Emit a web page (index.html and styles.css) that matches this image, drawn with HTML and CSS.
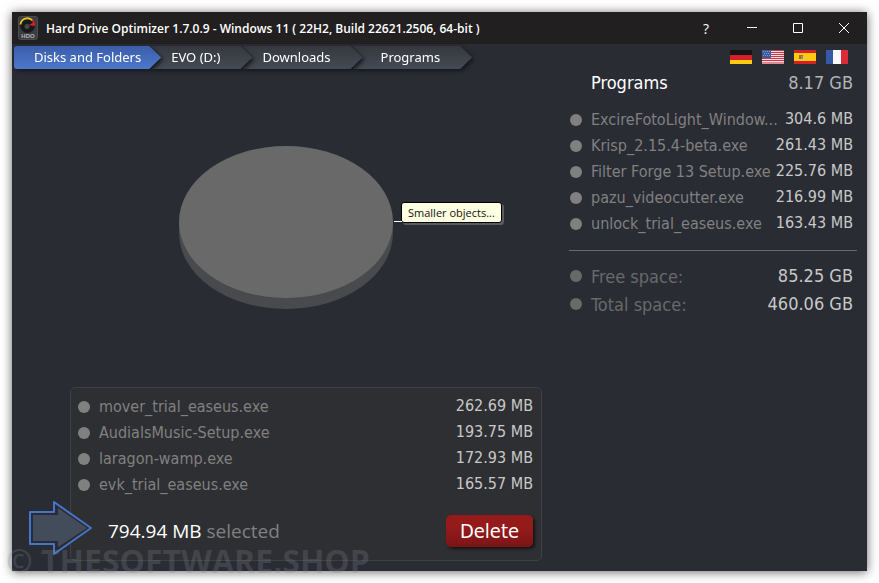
FILE: index.html
```
<!DOCTYPE html>
<html lang="en">
<head>
    <meta charset="UTF-8">
    <meta name="viewport" content="width=device-width, initial-scale=1.0">
    <title>Hard Drive Optimizer</title>
    <link rel="stylesheet" href="styles.css">
</head>
<body>
    <div class="window">
        <!-- Title bar -->
        <header class="titlebar">
            <svg class="app-icon" width="20" height="24" viewBox="0 0 20 24">
                <rect x="0.5" y="0.5" width="19" height="23" rx="2" fill="#3b3d42" stroke="#4a4c50"/>
                <circle cx="9.500" cy="9.500" r="7.500" fill="#18191b"/>
                <path d="M2.500 8.500a7 7 0 0 1 12-4" fill="none" stroke="#e8c41c" stroke-width="1.800"/>
                <path d="M14.500 4.500a7 7 0 0 1 2 5" fill="none" stroke="#d42027" stroke-width="1.800"/>
                <circle cx="9" cy="10.500" r="2.500" fill="#45474b"/>
                <path d="M10.500 9L16 6.500V10z" fill="#d42027"/>
                <text x="10" y="22" class="app-icon-text">HDO</text>
            </svg>
            <h1>Hard Drive Optimizer 1.7.0.9 - Windows 11 ( 22H2, Build 22621.2506, 64-bit )</h1>
            <div class="window-buttons">
                <button type="button" class="help">?</button>
                <button type="button" aria-label="Minimize">
                    <svg width="10" height="10" viewBox="0 0 10 10"><path d="M0 4.500h10"/></svg>
                </button>
                <button type="button" aria-label="Maximize">
                    <svg width="10" height="10" viewBox="0 0 10 10"><path d="M0.500 0.500h9v9h-9z"/></svg>
                </button>
                <button type="button" aria-label="Close">
                    <svg width="10" height="10" viewBox="0 0 10 10"><path d="M0 0l10 10M10 0L0 10"/></svg>
                </button>
            </div>
        </header>

        <div class="content">
            <main class="left">
                <nav>
                    <ul class="breadcrumb">
                        <li class="first active"><a href="#">Disks and Folders</a></li>
                        <li><a href="#">EVO (D:)</a></li>
                        <li><a href="#">Downloads</a></li>
                        <li class="last"><a href="#">Programs</a></li>
                    </ul>
                </nav>

                <!-- Pie chart -->
                <div class="chart-area">
                    <div class="chart">
                        <svg width="214" height="163" viewBox="0 0 214 163">
                            <path d="M0 76v11a107 76 0 0 0 214 0v-11z" fill="#494a4e"/>
                            <ellipse cx="107" cy="76" rx="107" ry="76" fill="#696969"/>
                        </svg>
                        <span class="chart-label">Smaller objects...</span>
                    </div>
                </div>

                <!-- Files marked for deletion -->
                <section class="selection">
                    <table class="files">
                        <tr><th scope="row">mover_trial_easeus.exe</th><td>262.69 MB</td></tr>
                        <tr><th scope="row">AudialsMusic-Setup.exe</th><td>193.75 MB</td></tr>
                        <tr><th scope="row">laragon-wamp.exe</th><td>172.93 MB</td></tr>
                        <tr><th scope="row">evk_trial_easeus.exe</th><td>165.57 MB</td></tr>
                    </table>
                    <div class="selection-footer">
                        <p><strong>794.94 MB</strong> selected</p>
                        <button type="button" class="delete">Delete</button>
                    </div>
                    <svg class="arrow" width="64" height="54" viewBox="0 0 64 54">
                        <path d="M1 11H25V1L62 27L25 53V43H1z" fill="#2a2c34" stroke="#4674ca" stroke-width="2" stroke-linejoin="round"/>
                        <path d="M4 14H29V7L58 27L29 46V40H4z" fill="#434c5a"/>
                    </svg>
                </section>
            </main>

            <aside class="right">
                <div class="flags">
                    <button type="button" aria-label="Deutsch">
                        <svg width="22" height="14" viewBox="0 0 22 14">
                            <path fill="#151515" d="M0 0h22v5H0z"/>
                            <path fill="#d5202b" d="M0 5h22v5H0z"/>
                            <path fill="#fccb12" d="M0 10h22v4H0z"/>
                        </svg>
                    </button>
                    <button type="button" aria-label="English">
                        <svg width="22" height="14" viewBox="0 0 22 14">
                            <path fill="#e4e4ea" d="M0 0h22v14H0z"/>
                            <path stroke="#d3303f" stroke-width="1" d="M0 0.500h22M0 2.500h22M0 4.500h22M0 6.500h22M0 8.500h22M0 10.500h22M0 13h22"/>
                            <path fill="#3d5c9e" d="M0 0h9v8H0z"/>
                            <path stroke="#7f93c0" stroke-dasharray="1 1" d="M1 1.500h7M2 3.500h6M1 5.500h7"/>
                        </svg>
                    </button>
                    <button type="button" aria-label="Español">
                        <svg width="22" height="14" viewBox="0 0 22 14">
                            <path fill="#d5202b" d="M0 0h22v14H0z"/>
                            <path fill="#fccb12" d="M0 3h22v8H0z"/>
                            <path fill="#b5672d" d="M5 5h4v4H5z"/>
                            <path fill="#8290a8" d="M7 6h2v3H7z"/>
                        </svg>
                    </button>
                    <button type="button" aria-label="Français">
                        <svg width="22" height="14" viewBox="0 0 22 14">
                            <path fill="#3659a5" d="M0 0h7v14H0z"/>
                            <path fill="#fafafa" d="M7 0h8v14H7z"/>
                            <path fill="#dc2a38" d="M15 0h7v14h-7z"/>
                        </svg>
                    </button>
                </div>

                <div class="folder">
                    <h2>Programs</h2>
                    <span>8.17 GB</span>
                </div>

                <table class="files">
                    <tr><th scope="row">ExcireFotoLight_Window...</th><td>304.6 MB</td></tr>
                    <tr><th scope="row">Krisp_2.15.4-beta.exe</th><td>261.43 MB</td></tr>
                    <tr><th scope="row">Filter Forge 13 Setup.exe</th><td>225.76 MB</td></tr>
                    <tr><th scope="row">pazu_videocutter.exe</th><td>216.99 MB</td></tr>
                    <tr><th scope="row">unlock_trial_easeus.exe</th><td>163.43 MB</td></tr>
                </table>

                <hr>

                <table class="files space">
                    <tr><th scope="row">Free space:</th><td>85.25 GB</td></tr>
                    <tr><th scope="row">Total space:</th><td>460.06 GB</td></tr>
                </table>
            </aside>
        </div>

        <div class="watermark">© THESOFTWARE.SHOP</div>
    </div>
</body>
</html>
```
FILE: styles.css
```
* {
    box-sizing: border-box;
}
body {
    margin: 0;
    padding: 12px;
    min-height: 100vh;
    display: flex;
    background-color: #fff;
    font-family: Tahoma, "DejaVu Sans Condensed", "DejaVu Sans", sans-serif;
    font-size: 16px;
    color: #808080;
}
button {
    margin: 0;
    padding: 0;
    border: none;
    background: none;
    font-family: inherit;
    cursor: pointer;
}
svg {
    display: block;
}
.window {
    position: relative;
    flex: 1;
    display: flex;
    flex-direction: column;
    background-color: #2a2c34;
    box-shadow: 0 1px 10px rgba(0, 0, 0, 0.6);
}

/* Title bar */
.titlebar {
    display: flex;
    align-items: center;
    height: 32px;
    padding-left: 6px;
    background-color: #221f20;
    color: #fff;
}
.app-icon-text {
    font: bold 6px "Liberation Sans", sans-serif;
    fill: #b5b5b5;
    text-anchor: middle;
}
.titlebar h1 {
    flex: 1;
    margin: 0 0 0 8px;
    font-family: "Segoe UI", "Open Sans", sans-serif;
    font-size: 12px;
    font-weight: 600;
    white-space: nowrap;
}
.window-buttons {
    display: flex;
}
.window-buttons button {
    display: flex;
    align-items: center;
    justify-content: center;
    width: 46px;
    height: 32px;
    color: #fff;
}
.window-buttons .help {
    font-family: "Segoe UI", "Open Sans", sans-serif;
    font-size: 14px;
}
.window-buttons path {
    fill: none;
    stroke: #fff;
}

.content {
    flex: 1;
    display: flex;
}
.left {
    flex: 1;
    display: flex;
    flex-direction: column;
}

/* Breadcrumb */
.breadcrumb {
    display: flex;
    margin: 0;
    padding: 2px;
    list-style: none;
}
.breadcrumb li {
    position: relative;
    margin-left: -10px;
    filter: drop-shadow(2px 2px 2px #15161a);
}
.breadcrumb li:nth-child(1) { z-index: 4; }
.breadcrumb li:nth-child(2) { z-index: 3; }
.breadcrumb li:nth-child(3) { z-index: 2; }
.breadcrumb li.first {
    margin-left: 0;
}
.breadcrumb a {
    display: block;
    padding: 0 32px 0 20px;
    line-height: 23px;
    font-family: "Noto Sans", sans-serif;
    font-size: 13px;
    text-decoration: none;
    color: #fff;
    background: linear-gradient(#36383e, #444a55);
    clip-path: polygon(0 0, calc(100% - 12px) 0, 100% 50%, calc(100% - 12px) 100%, 0 100%);
}
.breadcrumb .first a {
    padding-right: 20px;
}
.breadcrumb .last a {
    padding-left: 28px;
}
.breadcrumb .active a {
    background: linear-gradient(#3c5da8, #4c78cc);
    border-radius: 3px;
}

/* Pie chart */
.chart-area {
    flex: 1;
    display: flex;
    align-items: center;
    justify-content: center;
    padding: 0 9px 3px 0;
}
.chart {
    position: relative;
}
.chart-label {
    position: absolute;
    top: 56px;
    left: 222px;
    padding: 0 6px;
    line-height: 19px;
    font-family: "Segoe UI", "Open Sans", sans-serif;
    font-size: 11px;
    white-space: nowrap;
    color: #111;
    background-color: #ffffe1;
    border: 1px solid #000;
    border-radius: 3px;
    box-shadow: 2px 2px 0 #5a5b60;
}
.chart-label::before {
    content: "";
    position: absolute;
    right: 100%;
    bottom: 0;
    width: 8px;
    height: 1px;
    background-color: #fff;
}

/* File lists */
.files {
    width: 100%;
    table-layout: fixed;
    border-collapse: collapse;
}
.files tr {
    height: 26px;
}
.files th,
.files td {
    padding: 0;
    line-height: 26px;
    font-weight: normal;
    white-space: nowrap;
}
.files th {
    width: 70%;
    text-align: left;
}
.files th::before {
    content: "";
    display: inline-block;
    width: 12px;
    height: 12px;
    margin-right: 9px;
    border-radius: 50%;
    background-color: #808080;
    vertical-align: -1px;
}
.files td {
    padding-bottom: 2px;
    line-height: 24px;
    text-align: right;
    color: #c8c8c8;
}

/* Selected files */
.selection {
    position: relative;
    margin: 0 27px 10px 58px;
    padding: 6px 8px 13px 7px;
    background-color: #2e2f32;
    border: 1px solid #3f4043;
    border-radius: 5px;
}
.selection-footer {
    display: flex;
    align-items: center;
    justify-content: space-between;
    margin-top: 17px;
    padding-left: 30px;
}
.selection-footer p {
    margin: 0;
    font-family: "Segoe UI", "Open Sans", sans-serif;
    font-size: 19px;
    line-height: 24px;
}
.selection-footer strong {
    font-weight: normal;
    color: #fff;
}
.delete {
    width: 87px;
    height: 32px;
    font-size: 20px;
    color: #fff;
    background: linear-gradient(#951a1a 40%, #7a1517);
    border-radius: 5px;
    box-shadow: 2px 2px 3px #151517;
}
.arrow {
    position: absolute;
    left: -42px;
    bottom: 5px;
}

/* Right panel */
.right {
    width: 298px;
    padding-right: 10px;
}
.flags {
    display: flex;
    justify-content: flex-end;
    gap: 10px;
    padding: 6px 9px 6px 0;
}
.folder {
    display: flex;
    justify-content: space-between;
    align-items: center;
    margin-bottom: 11px;
    padding: 0 4px 0 22px;
    line-height: 26px;
    font-size: 18px;
    color: #b4b4b4;
}
.folder h2 {
    margin: 0;
    font-size: 18px;
    font-weight: normal;
    color: #fff;
}
.right .files th {
    padding-left: 1px;
}
.right .files td {
    padding-right: 4px;
}
.right hr {
    margin: 13px 0 12px;
    border: none;
    border-top: 1px solid #6a6a6a;
}
.space {
    font-size: 18px;
    color: #696969;
}
.space tr {
    height: 28px;
}
.right .space th {
    width: 60%;
}
.space th::before {
    background-color: #696969;
    vertical-align: 1px;
}

.watermark {
    position: absolute;
    left: -6px;
    bottom: -6px;
    font-family: "Open Sans", sans-serif;
    font-size: 32px;
    font-weight: bold;
    line-height: 32px;
    white-space: nowrap;
    color: rgba(130, 135, 150, 0.25);
    pointer-events: none;
}
```
